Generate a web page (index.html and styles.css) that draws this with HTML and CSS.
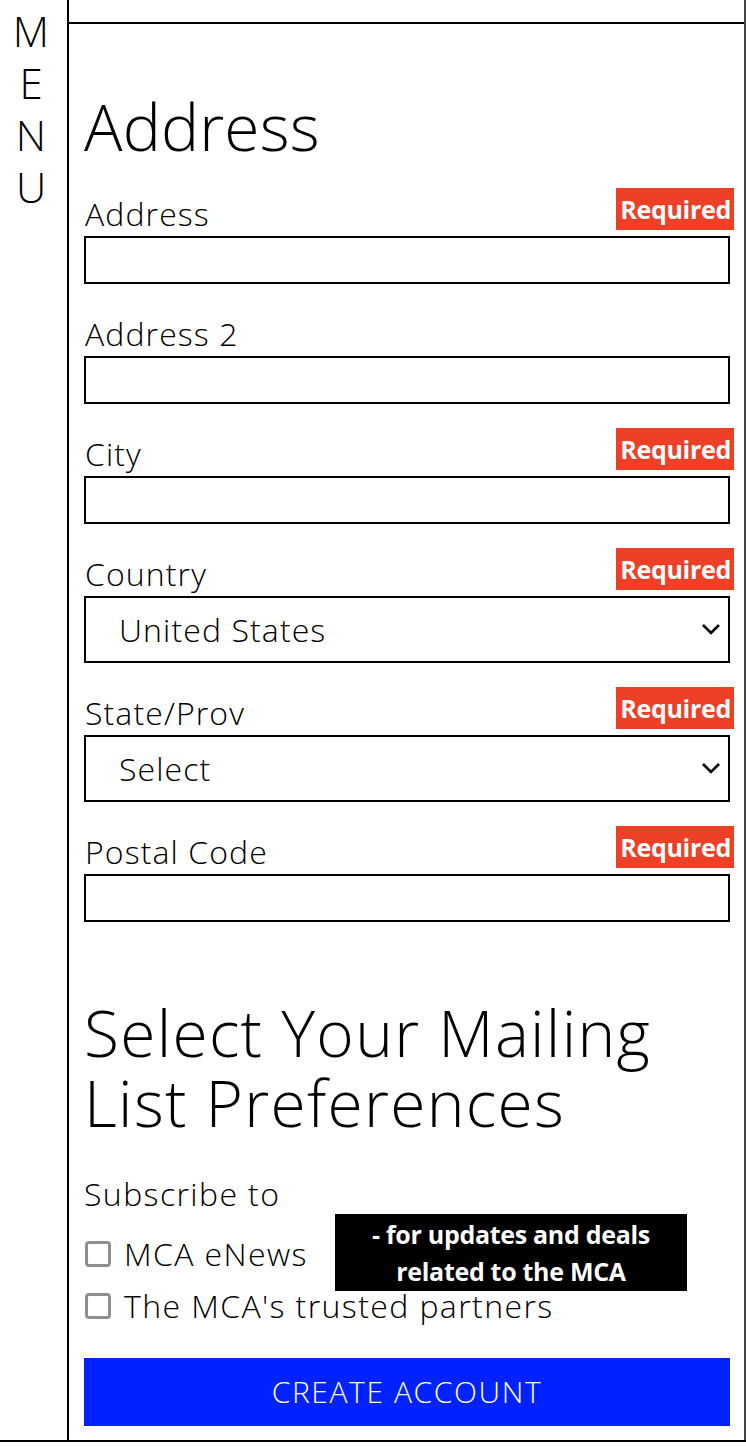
FILE: index.html
```html
<!DOCTYPE html>
<html lang="en">
<head>
<meta charset="utf-8">
<title>Create Account</title>
<link rel="stylesheet" href="styles.css">
</head>
<body>
<div class="page">
  <aside class="sidebar">
    <div class="menu"><span>M</span><span>E</span><span>N</span><span>U</span></div>
  </aside>
  <main class="main">
    <div class="topbar"></div>
    <div class="content">
      <h1 class="heading">Address</h1>

      <div class="field first">
        <div class="field-head"><label class="label">Address</label><span class="badge">Required</span></div>
        <div class="input"></div>
      </div>
      <div class="field">
        <div class="field-head"><label class="label">Address 2</label></div>
        <div class="input"></div>
      </div>
      <div class="field">
        <div class="field-head"><label class="label">City</label><span class="badge">Required</span></div>
        <div class="input"></div>
      </div>
      <div class="field">
        <div class="field-head"><label class="label">Country</label><span class="badge">Required</span></div>
        <div class="select"><span class="select-text">United States</span>
          <svg class="chev" width="20" height="12" viewBox="0 0 20 12"><path d="M2 2 L10 10 L18 2" fill="none" stroke="#000" stroke-width="2.6"/></svg>
        </div>
      </div>
      <div class="field">
        <div class="field-head"><label class="label">State/Prov</label><span class="badge">Required</span></div>
        <div class="select"><span class="select-text">Select</span>
          <svg class="chev" width="20" height="12" viewBox="0 0 20 12"><path d="M2 2 L10 10 L18 2" fill="none" stroke="#000" stroke-width="2.6"/></svg>
        </div>
      </div>
      <div class="field">
        <div class="field-head"><label class="label">Postal Code</label><span class="badge">Required</span></div>
        <div class="input"></div>
      </div>

      <h2 class="heading heading-2">Select Your Mailing List Preferences</h2>
      <div class="sub-title">Subscribe to</div>
      <div class="checks">
        <div class="check-row"><span class="box"></span><span class="check-text">MCA eNews</span></div>
        <div class="check-row"><span class="box"></span><span class="check-text">The MCA's trusted partners</span></div>
        <div class="tooltip">- for updates and deals<br>related to the MCA</div>
      </div>
      <button class="btn">CREATE ACCOUNT</button>
    </div>
  </main>
</div>
</body>
</html>
```

FILE: styles.css
```css
* { box-sizing: border-box; }
html, body { margin: 0; padding: 0; background: #fff; }
body { font-family: "Open Sans", "Liberation Sans", sans-serif; font-weight: 300; color: #000; }

.page {
  display: flex;
  width: 746px;
  height: 1442px;
  border-bottom: 2px solid #000;
}

.sidebar {
  width: 69px;
  border-right: 2px solid #000;
  padding-top: 5px;
  padding-right: 5px;
}
.menu {
  display: flex;
  flex-direction: column;
  align-items: center;
  font-size: 42px;
  line-height: 52px;
}

.main {
  flex: 1;
  border-right: 2px solid #444;
  display: flex;
  flex-direction: column;
}
.topbar {
  height: 24px;
  border-bottom: 2px solid #000;
}
.content {
  padding: 0 14px 0 15px;
  position: relative;
}

.heading {
  margin: 0;
  font-weight: 300;
  font-size: 64px;
  line-height: 70px;
  padding-top: 68px;
  letter-spacing: 0.2px;
}

.field { margin-top: 24px; }
.field.first { margin-top: 25.5px; }
.field-head {
  display: flex;
  justify-content: space-between;
  align-items: flex-end;
  height: 42px;
  margin-bottom: 6px;
}
.label {
  font-size: 32px;
  line-height: 32px;
  padding-left: 1px;
  letter-spacing: 1.1px;
}
.badge {
  background: #ee4027;
  color: #fff;
  font-weight: 700;
  font-size: 25px;
  height: 42px;
  line-height: 42px;
  padding: 0 3px 0 4px;
  margin-right: -4px;
  letter-spacing: -0.3px;
}
.input {
  height: 48px;
  border: 2px solid #000;
}
.select {
  height: 67px;
  border: 2px solid #000;
  display: flex;
  align-items: center;
  justify-content: space-between;
  padding: 0 7px 0 33px;
}
.select-text { font-size: 32px; letter-spacing: 1.1px; }
.chev { display: block; }

.heading-2 {
  padding-top: 76px;
  max-width: 620px;
  letter-spacing: 1.3px;
}

.sub-title {
  font-size: 32px;
  margin-top: 36px;
  line-height: 40px;
  letter-spacing: 1.4px;
}
.checks {
  position: relative;
  margin-top: 14px;
}
.check-row {
  display: flex;
  align-items: center;
  gap: 13px;
  height: 52px;
}
.box {
  width: 26px;
  height: 26px;
  border: 3px solid #8e8e93;
  border-radius: 4px;
  margin-left: 1px;
}
.check-text { font-size: 32px; line-height: 32px; letter-spacing: 1.4px; }
.tooltip {
  position: absolute;
  left: 251px;
  top: -14px;
  width: 352px;
  height: 77px;
  background: #000;
  color: #fff;
  font-weight: 700;
  font-size: 25px;
  line-height: 37px;
  text-align: center;
  padding-top: 2px;
  letter-spacing: -0.3px;
}

.btn {
  display: block;
  width: 100%;
  height: 68px;
  margin-top: 26px;
  background: #0022ff;
  color: #fff;
  border: none;
  font-family: "Open Sans", "Liberation Sans", sans-serif;
  font-weight: 300;
  font-size: 30px;
  letter-spacing: 1.6px;
  padding: 0;
}
```
